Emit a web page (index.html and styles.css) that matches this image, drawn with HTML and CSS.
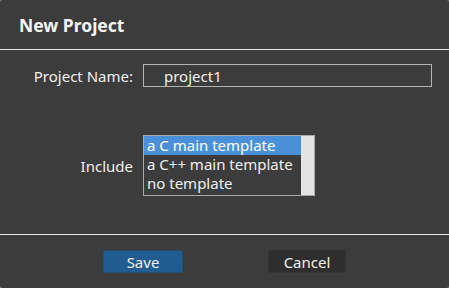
FILE: index.html
```html
<!DOCTYPE html>
<html lang="en">
<head>
  <meta charset="UTF-8" />
  <meta name="viewport" content="width=device-width, initial-scale=1.0"/>
  <title>New Project</title>
  <link rel="stylesheet" href="styles.css">
</head>
<body>
  <div class="dialog">
    <div class="dialog-header">
      <h2>New Project</h2>
    </div>

    <form class="dialog-body" id="newProjectForm">
      <label for="projectName">Project Name:</label>
      <input type="text" id="projectName" value="project1" />

      <label class="include-label">Include</label>
      <div class="listbox">
        <ul class="options">
          <li class="selected">a C main template</li>
          <li>a C++ main template</li>
          <li>no template</li>
        </ul>
        <div class="scrollbar"></div>
      </div>
    </form>

    <div class="dialog-footer">
      <button type="submit" form="newProjectForm" class="btn btn-primary">Save</button>
      <button type="button" class="btn">Cancel</button>
    </div>
  </div>
</body>
</html>
```

FILE: styles.css
```css
html {
  background: #7a7a7a;
}

body {
  margin: 0;
  font-family: 'Noto Sans', 'Open Sans', sans-serif;
  color: #f0f0f0;
}

.dialog {
  width: 449px;
  height: 288px;
  background: #3c3c3c;
  border-radius: 3px;
  overflow: hidden;
}

.dialog-header {
  height: 49px;
  border-bottom: 1px solid #e6e6e6;
  padding-left: 19px;
  display: flex;
  align-items: center;
}

h2 {
  margin: 0;
  font-size: 17.5px;
  font-weight: bold;
  color: #f5f5f5;
}

.dialog-body {
  display: grid;
  grid-template-columns: 133px 289px;
  column-gap: 10px;
  row-gap: 48px;
  align-items: center;
  padding: 14px 0 38px;
  font-size: 15px;
}

.dialog-body label {
  text-align: right;
}

input[type="text"] {
  box-sizing: border-box;
  width: 289px;
  height: 23px;
  margin: 0;
  padding: 0 0 0 20px;
  background: transparent;
  border: 1px solid #b4b4b4;
  color: #f0f0f0;
  font-family: inherit;
  font-size: 15px;
  outline: none;
}

.listbox {
  box-sizing: border-box;
  width: 172px;
  height: 61px;
  border: 1px solid #a8a8a8;
  display: flex;
}

.options {
  flex: 1;
  list-style: none;
  margin: 0;
  padding: 0;
  overflow: hidden;
}

.options li {
  height: 19px;
  line-height: 19px;
  padding-left: 3px;
  white-space: nowrap;
}

.options li.selected {
  background: #4a90d9;
  color: #fff;
}

.scrollbar {
  width: 13px;
  background: #e3e3e3;
}

.dialog-footer {
  border-top: 1px solid #e6e6e6;
  display: flex;
  justify-content: center;
  gap: 85px;
  padding-top: 15px;
}

.btn {
  box-sizing: border-box;
  width: 78px;
  height: 23px;
  padding: 0;
  background: #2e2e2e;
  border: 1px solid #333;
  border-radius: 2px;
  color: #f0f0f0;
  font-family: inherit;
  font-size: 15px;
  cursor: pointer;
}

.btn-primary {
  width: 80px;
  background: #215c91;
  border-color: #2a4d6e;
}
```
